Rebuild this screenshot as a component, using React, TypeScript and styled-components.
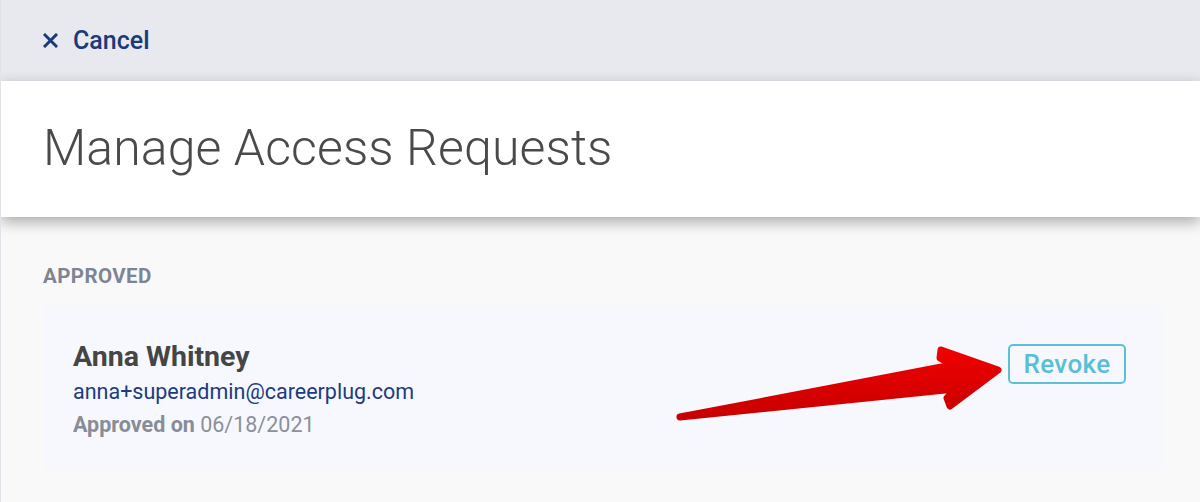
import React from "react";
import styled, { createGlobalStyle } from "styled-components";

const Global = createGlobalStyle`
  html, body { margin: 0; padding: 0; }
  body {
    font-family: Roboto, "Liberation Sans", sans-serif;
    background: #f9f9fa;
    -webkit-font-smoothing: antialiased;
  }
`;

const Page = styled.div`
  position: relative;
  width: 1200px;
  height: 502px;
  overflow: hidden;
  background: #f9f9fa;
  border-left: 1px solid #e2e3e8;
  box-sizing: border-box;
  display: flex;
  flex-direction: column;
`;

const TopBar = styled.div`
  height: 81px;
  flex: none;
  background: #e8e9ee;
  display: flex;
  align-items: center;
  padding-left: 42px;
`;

const CancelButton = styled.button`
  display: flex;
  align-items: center;
  gap: 15px;
  background: none;
  border: none;
  padding: 0;
  margin-top: -1px;
  font-family: Roboto, "Liberation Sans", sans-serif;
  font-weight: 500;
  font-size: 25px;
  color: #1b3a7a;
  cursor: pointer;
`;

const Header = styled.div`
  height: 136px;
  flex: none;
  background: #ffffff;
  display: flex;
  align-items: center;
  padding-left: 42px;
  box-shadow: 0 5px 14px rgba(0, 0, 0, 0.32);
  position: relative;
  z-index: 1;
`;

const Title = styled.h1`
  margin: 0;
  margin-top: -3px;
  font-family: Roboto, "Liberation Sans", sans-serif;
  font-weight: 300;
  font-size: 50px;
  color: #4a4a4a;
  letter-spacing: 0.1px;
`;

const Content = styled.div`
  padding: 47px 38px 0 42px;
  display: flex;
  flex-direction: column;
`;

const SectionLabel = styled.div`
  font-family: Roboto, "Liberation Sans", sans-serif;
  font-weight: 700;
  font-size: 20.5px;
  color: #7e8592;
  letter-spacing: 0.4px;
  line-height: 24px;
`;

const Card = styled.div`
  margin-top: 18px;
  height: 164px;
  background: #f6f8fd;
  display: flex;
  align-items: flex-start;
  justify-content: space-between;
  padding: 35px 36px 0 30px;
  box-sizing: border-box;
`;

const Info = styled.div`
  display: flex;
  flex-direction: column;
`;

const Name = styled.div`
  font-weight: 700;
  font-size: 28.5px;
  line-height: 32px;
  color: #454545;
`;

const Email = styled.div`
  margin-top: 5px;
  font-size: 21.5px;
  line-height: 28px;
  color: #1d3b80;
`;

const Approved = styled.div`
  margin-top: 5px;
  font-size: 21.5px;
  line-height: 28px;
  color: #8c9099;
  & b {
    font-weight: 700;
    color: #878c96;
  }
`;

const RevokeButton = styled.button`
  margin-top: 3px;
  width: 118px;
  height: 40px;
  box-sizing: border-box;
  border: 2px solid #5bc0d8;
  border-radius: 5px;
  background: transparent;
  font-family: Roboto, "Liberation Sans", sans-serif;
  font-weight: 500;
  font-size: 26px;
  color: #58bfd8;
  letter-spacing: 0.4px;
  padding: 0;
  cursor: pointer;
`;

const ArrowSvg = styled.svg`
  position: absolute;
  left: 670px;
  top: 340px;
  width: 350px;
  height: 90px;
  z-index: 2;
  pointer-events: none;
`;

function XIcon() {
  return (
    <svg width="15" height="15" viewBox="0 0 15 15">
      <path d="M2 2 L13 13 M13 2 L2 13" stroke="#1b3a7a" strokeWidth="3" strokeLinecap="square" />
    </svg>
  );
}

export default function App() {
  return (
    <>
      <Global />
      <Page>
        <TopBar>
          <CancelButton>
            <XIcon />
            Cancel
          </CancelButton>
        </TopBar>
        <Header>
          <Title>Manage Access Requests</Title>
        </Header>
        <Content>
          <SectionLabel>APPROVED</SectionLabel>
          <Card>
            <Info>
              <Name>Anna Whitney</Name>
              <Email>anna+superadmin@careerplug.com</Email>
              <Approved>
                <b>Approved on</b> 06/18/2021
              </Approved>
            </Info>
            <RevokeButton>Revoke</RevokeButton>
          </Card>
        </Content>
        <ArrowSvg viewBox="0 0 350 90">
          <defs>
            <linearGradient id="ag" x1="0" y1="0" x2="0" y2="1">
              <stop offset="0" stopColor="#f00000" />
              <stop offset="1" stopColor="#c80000" />
            </linearGradient>
          </defs>
          <path
            d="M270 10 L327 30 L279 66 L276 58 L284 49 L9 77 L281 25 L269 18 Z"
            fill="url(#ag)"
            stroke="url(#ag)"
            strokeWidth="7"
            strokeLinejoin="round"
          />
        </ArrowSvg>
      </Page>
    </>
  );
}
